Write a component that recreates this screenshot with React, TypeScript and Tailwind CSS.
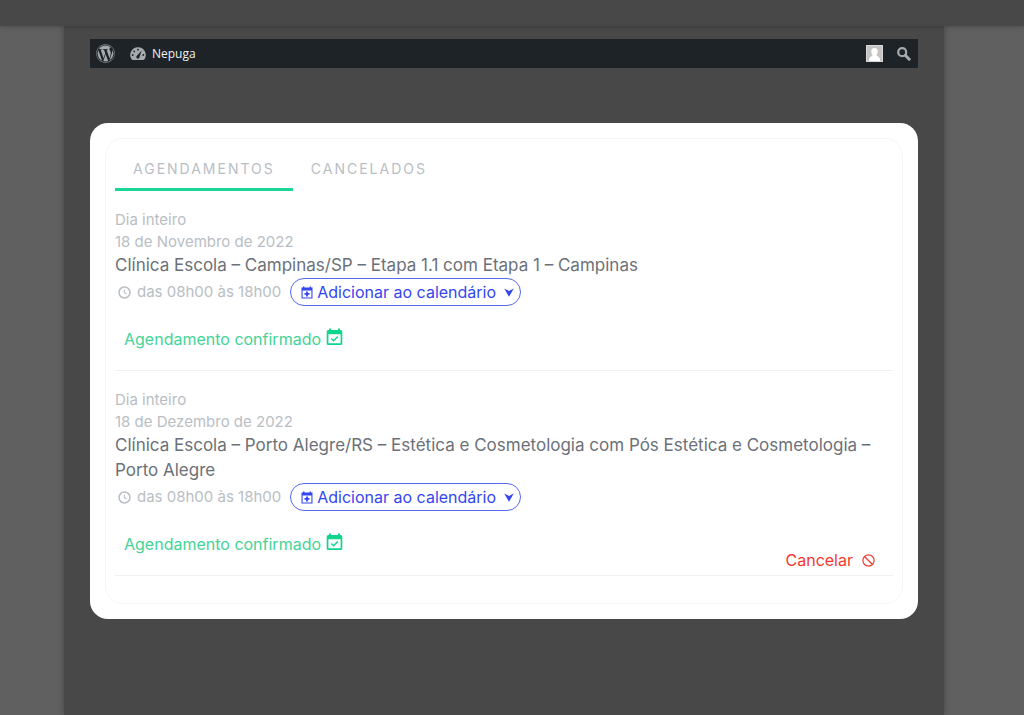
import { useState } from "react";
import { FaWordpress } from "react-icons/fa";

type Booking = {
  id: number;
  date: string;
  title: string;
  time: string;
  cancelable: boolean;
};

const bookings: Booking[] = [
  {
    id: 1,
    date: "18 de Novembro de 2022",
    title: "Clínica Escola – Campinas/SP – Etapa 1.1 com Etapa 1 – Campinas",
    time: "das 08h00 às 18h00",
    cancelable: false,
  },
  {
    id: 2,
    date: "18 de Dezembro de 2022",
    title:
      "Clínica Escola – Porto Alegre/RS – Estética e Cosmetologia com Pós Estética e Cosmetologia – Porto Alegre",
    time: "das 08h00 às 18h00",
    cancelable: true,
  },
];

function DashboardIcon() {
  return (
    <svg viewBox="0 0 16 14" className="h-[14px] w-4" aria-hidden="true">
      <path d="M8 0.3A7.7 7.7 0 0 0 1.5 12.2Q2 13 3 13H13Q14 13 14.5 12.2A7.7 7.7 0 0 0 8 0.3Z" fill="#a7aaad" />
      <g fill="#1d2327">
        <circle cx="2.7" cy="8" r="0.9" />
        <circle cx="4.2" cy="4.4" r="0.9" />
        <circle cx="8" cy="2.7" r="0.9" />
        <circle cx="13.3" cy="8" r="0.9" />
        <path d="M11.6 3.4L9.5 10.3A1.6 1.6 0 1 1 7.2 8.6Z" />
      </g>
    </svg>
  );
}

function SearchIcon() {
  return (
    <svg viewBox="0 0 14 14" className="h-[14px] w-[14px]" fill="none" stroke="#a7aaad" aria-hidden="true">
      <circle cx="5.2" cy="5.2" r="4" strokeWidth="2.2" />
      <path d="M8.4 8.4L12.2 12.2" strokeWidth="3" strokeLinecap="round" />
    </svg>
  );
}

function AvatarIcon() {
  return (
    <svg viewBox="0 0 17 17" className="h-[17px] w-[17px]" aria-hidden="true">
      <rect width="17" height="17" fill="#c4c4c4" />
      <path
        d="M8.5 3C6.3 3 5.2 4.6 5.3 6.5C5.4 8 5.8 9.2 6.6 10C6.5 11.2 3.6 11.6 3 14V16H14V14C13.4 11.6 10.5 11.2 10.4 10C11.2 9.2 11.6 8 11.7 6.5C11.8 4.6 10.7 3 8.5 3Z"
        fill="#ffffff"
      />
      <rect x="0.5" y="0.5" width="16" height="16" fill="none" stroke="#d8d8d8" />
    </svg>
  );
}

function ClockIcon() {
  return (
    <svg viewBox="0 0 13 13" className="h-[13px] w-[13px] shrink-0" fill="none" stroke="currentColor" aria-hidden="true">
      <circle cx="6.5" cy="6.5" r="5.5" strokeWidth="1.5" />
      <path d="M6.3 3.4V6.8L8.6 8.1" strokeWidth="1.1" />
    </svg>
  );
}

function CalendarAddIcon() {
  return (
    <svg viewBox="0 0 12 13" className="h-[13px] w-3 shrink-0" aria-hidden="true">
      <path d="M0.5 1.5H2V0.4H3.4V1.5H8.6V0.4H10V1.5H11.5V12.5H0.5ZM1.6 4.4V11.4H10.4V4.4Z" fill="currentColor" fillRule="evenodd" />
      <path d="M6 5.4V10.4M3.5 7.9H8.5" stroke="currentColor" strokeWidth="1.8" />
    </svg>
  );
}

function ArrowDownIcon() {
  return (
    <svg viewBox="0 0 10 9" className="h-[9px] w-[10px] shrink-0" aria-hidden="true">
      <path d="M0.2 0.5L5 3L9.8 0.5L5 8.7Z" fill="currentColor" />
    </svg>
  );
}

function CalendarCheckIcon() {
  return (
    <svg viewBox="0 0 17 18" className="h-[18px] w-[17px] shrink-0 text-[#10d58e]" aria-hidden="true">
      <path
        d="M2.3 2H3V0.4H5V2H12V0.4H14V2H14.7Q16.3 2 16.3 3.6V15.4Q16.3 17 14.7 17H2.3Q0.7 17 0.7 15.4V3.6Q0.7 2 2.3 2ZM2.4 6.2V15.3H14.6V6.2Z"
        fill="currentColor"
        fillRule="evenodd"
      />
      <path d="M5.3 10.6L7.6 12.8L11.8 8.6" fill="none" stroke="currentColor" strokeWidth="1.4" />
    </svg>
  );
}

function BanIcon() {
  return (
    <svg viewBox="0 0 13 13" className="h-[13px] w-[13px]" fill="none" stroke="currentColor" strokeWidth="1.2" aria-hidden="true">
      <circle cx="6.5" cy="6.5" r="5.6" />
      <path d="M2.5 2.5L10.5 10.5" />
    </svg>
  );
}

function BookingItem({ booking }: { booking: Booking }) {
  return (
    <li className="border-b border-[#f1f1f2] pt-[18px]">
      <p className="text-[15px] leading-[22px] text-[#b9bec4]">Dia inteiro</p>
      <p className="text-[15px] leading-[22px] text-[#b9bec4]">{booking.date}</p>
      <h2 className="text-[17px] leading-[25px] text-[#6b7179]">{booking.title}</h2>
      <div className="flex items-center">
        <span className="flex items-center gap-[6px] pl-[3px] text-[15px] text-[#b9bec4]">
          <ClockIcon />
          {booking.time}
        </span>
        <button
          type="button"
          className="ml-[9px] flex h-7 items-center gap-1 rounded-full border border-[#5468f0] pl-[10px] pr-[6px] text-[#3346ef]"
        >
          <CalendarAddIcon />
          <span className="pr-1">Adicionar ao calendário</span>
          <ArrowDownIcon />
        </button>
      </div>
      <div className="flex items-start justify-between pt-[22px]">
        <p className="flex gap-[5px] pb-5 pl-[9px] leading-[22px] text-[#45d396]">
          Agendamento confirmado
          <CalendarCheckIcon />
        </p>
        {booking.cancelable && (
          <button type="button" className="flex items-center gap-[9px] self-end pr-[18px] leading-[30px] text-[#f3392f]">
            Cancelar
            <BanIcon />
          </button>
        )}
      </div>
    </li>
  );
}

export default function App() {
  const [tab, setTab] = useState("agendamentos");
  const tabClass = "flex h-[52px] items-center border-b-3 px-[18px] text-[14px] tracking-[2px] text-[#b9bec4] uppercase";

  return (
    <div className="flex min-h-screen flex-col bg-[#606060] font-['Inter',sans-serif] text-base">
      <header className="z-10 h-[26px] bg-[#484848] shadow-[0_0_5px_rgba(0,0,0,0.3)]" />
      <div className="flex grow flex-col pr-20 pl-16">
        <main className="grow bg-[#484848] px-[26px] pt-[13px] pb-16 shadow-[0_0_6px_rgba(0,0,0,0.3)]">
          <nav className="flex h-[29px] items-center bg-[#1d2327] pr-[7px] pl-[6px] font-['Open_Sans',sans-serif] text-xs text-[#f0f0f1]">
            <a href="#wordpress" aria-label="WordPress">
              <FaWordpress className="h-[19px] w-[19px] text-[#a7aaad]" />
            </a>
            <a href="#nepuga" className="ml-[15px] flex items-center gap-[6px]">
              <DashboardIcon />
              Nepuga
            </a>
            <a href="#perfil" aria-label="Perfil" className="ml-auto">
              <AvatarIcon />
            </a>
            <button type="button" aria-label="Pesquisar" className="ml-[14px]">
              <SearchIcon />
            </button>
          </nav>

          <section className="mt-[55px] rounded-[18px] bg-white p-[15px]">
            <div className="rounded-[18px] border border-[#f5f5f6] px-[9px] pb-[27px]">
              <div className="flex" role="tablist">
                <button
                  type="button"
                  role="tab"
                  aria-selected={tab === "agendamentos"}
                  onClick={() => setTab("agendamentos")}
                  className={`${tabClass} ${tab === "agendamentos" ? "border-[#1ad598]" : "border-transparent"}`}
                >
                  <span className="pt-[9px]">Agendamentos</span>
                </button>
                <button
                  type="button"
                  role="tab"
                  aria-selected={tab === "cancelados"}
                  onClick={() => setTab("cancelados")}
                  className={`${tabClass} ${tab === "cancelados" ? "border-[#1ad598]" : "border-transparent"}`}
                >
                  <span className="pt-[9px]">Cancelados</span>
                </button>
              </div>
              <ul>
                {bookings.map((booking) => (
                  <BookingItem key={booking.id} booking={booking} />
                ))}
              </ul>
            </div>
          </section>
        </main>
      </div>
    </div>
  );
}
